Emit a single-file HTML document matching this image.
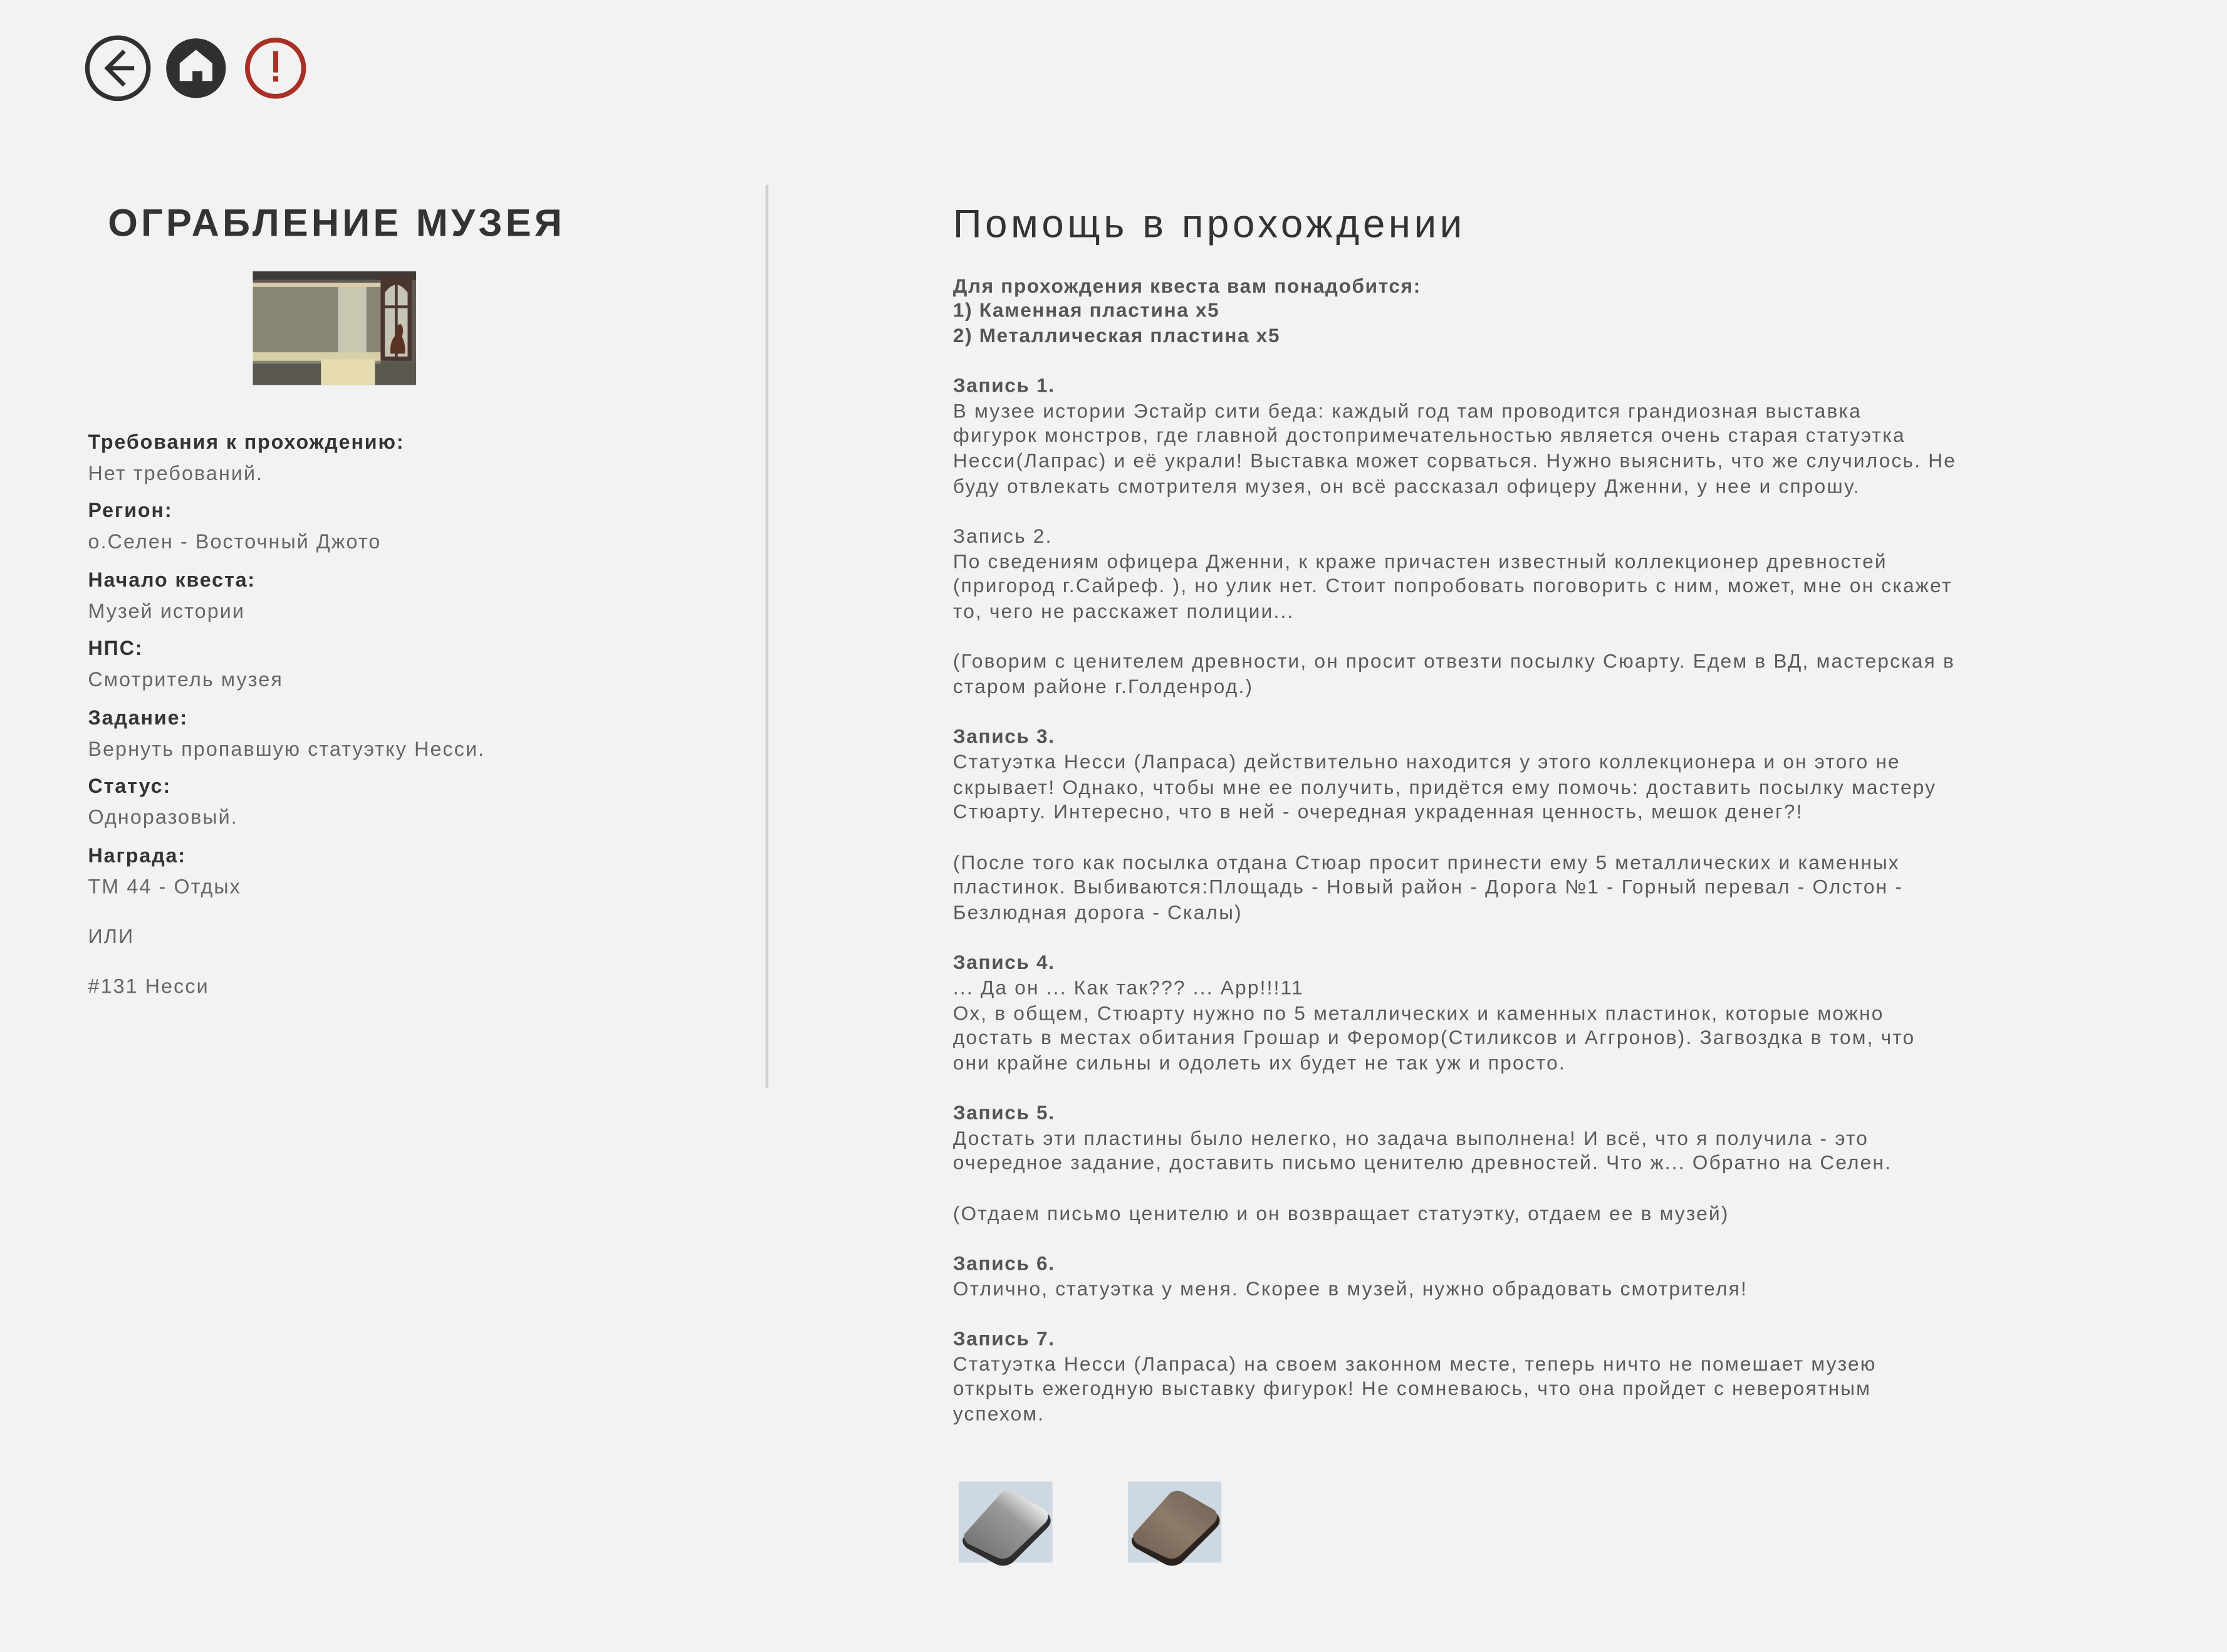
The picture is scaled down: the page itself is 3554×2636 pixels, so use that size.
<!DOCTYPE html>
<html><head><meta charset="utf-8">
<style>
html,body{margin:0;padding:0;background:#f2f2f2;}
body{width:3554px;height:2634px;overflow:hidden;}
#s{position:absolute;left:0;top:0;width:1568px;height:1163px;transform:scale(2.26658);transform-origin:0 0;font-family:"Liberation Sans",sans-serif;color:#5a5a5a;}
.a{position:absolute;white-space:nowrap;}
h1{position:absolute;left:76px;top:142px;margin:0;font-size:27px;font-weight:700;color:#333;letter-spacing:2.3px;}
h2{position:absolute;left:671px;top:142px;margin:0;font-size:28px;font-weight:400;color:#333;letter-spacing:2.5px;}
.lab{font-weight:700;color:#333;font-size:14.2px;letter-spacing:0.85px;}
.val{font-size:14.2px;color:#666;letter-spacing:0.95px;}
#r{position:absolute;left:671px;top:192.5px;font-size:13.9px;line-height:17.67px;color:#5a5a5a;letter-spacing:1.0px;}
#r div{white-space:nowrap;height:17.67px;}
#r b{font-weight:700;color:#555;letter-spacing:0.75px;}
</style></head><body><div id="s">
<svg class="a" style="left:58px;top:23px" width="170" height="50" viewBox="0 0 170 50">
<circle cx="25" cy="25" r="21.5" fill="none" stroke="#303030" stroke-width="3.2"/>
<path d="M29.5 13 L17.5 25 L29.5 37 M17.5 25 H36.5" fill="none" stroke="#303030" stroke-width="3"/>
<circle cx="80" cy="25" r="21" fill="#303030"/>
<path d="M80 12 L91.5 21.5 V34 H84.5 V27 H77.5 V34 H68.5 V21.5 Z" fill="#f2f2f2"/>
<circle cx="136" cy="25" r="19.8" fill="none" stroke="#a93026" stroke-width="3.4"/>
<rect x="134.3" y="13" width="3.6" height="15" fill="#a93026"/><rect x="134.3" y="30.5" width="3.6" height="4" fill="#a93026"/>
</svg>
<h1>ОГРАБЛЕНИЕ МУЗЕЯ</h1>
<svg class="a" style="left:178px;top:191px" width="115" height="80" viewBox="0 0 115 80">
<rect width="115" height="80" fill="#5e5a52"/>
<rect x="0" y="0" width="115" height="6" fill="#3e3a36"/>
<rect x="0" y="8" width="90" height="57" fill="#8a8676"/>
<rect x="60" y="10" width="20" height="50" fill="#c9c6b2"/>
<rect x="0" y="8" width="90" height="3" fill="#d8ccaa"/>
<rect x="0" y="65" width="115" height="15" fill="#5a5650"/>
<rect x="0" y="57" width="95" height="6" fill="#d9cfa6"/>
<rect x="48" y="62" width="38" height="18" fill="#e6dcaf"/>
<rect x="90" y="3" width="22" height="60" fill="#4a3630"/>
<path d="M93 30 V15 Q101 4 109 15 V60 H93 Z" fill="#c6c4b4"/>
<rect x="100" y="6" width="2" height="56" fill="#4a3630"/><rect x="93" y="24" width="16" height="2" fill="#4a3630"/>
<path d="M97 58 Q96 48 102 44 Q100 38 104 37 Q107 40 105 46 Q108 52 107 58 Z" fill="#5a3224"/>
</svg>
<div class="a lab" style="left:62px;top:304px">Требования к прохождению:</div>
<div class="a val" style="left:62px;top:326px">Нет требований.</div>
<div class="a lab" style="left:62px;top:352px">Регион:</div>
<div class="a val" style="left:62px;top:374px">о.Селен - Восточный Джото</div>
<div class="a lab" style="left:62px;top:401px">Начало квеста:</div>
<div class="a val" style="left:62px;top:423px">Музей истории</div>
<div class="a lab" style="left:62px;top:449px">НПС:</div>
<div class="a val" style="left:62px;top:471px">Смотритель музея</div>
<div class="a lab" style="left:62px;top:498px">Задание:</div>
<div class="a val" style="left:62px;top:520px">Вернуть пропавшую статуэтку Несси.</div>
<div class="a lab" style="left:62px;top:546px">Статус:</div>
<div class="a val" style="left:62px;top:568px">Одноразовый.</div>
<div class="a lab" style="left:62px;top:595px">Награда:</div>
<div class="a val" style="left:62px;top:617px">ТМ 44 - Отдых</div>
<div class="a val" style="left:62px;top:652px">ИЛИ</div>
<div class="a val" style="left:62px;top:687px">#131 Несси</div>
<div class="a" style="left:539px;top:130px;width:2px;height:636px;background:#d0d0d0"></div>
<h2>Помощь в прохождении</h2>
<div id="r">
<div><b>Для прохождения квеста вам понадобится:</b></div>
<div><b>1) Каменная пластина х5</b></div>
<div><b>2) Металлическая пластина х5</b></div>
<div></div>
<div><b>Запись 1.</b></div>
<div>В музее истории Эстайр сити беда: каждый год там проводится грандиозная выставка</div>
<div>фигурок монстров, где главной достопримечательностью является очень старая статуэтка</div>
<div>Несси(Лапрас) и её украли! Выставка может сорваться. Нужно выяснить, что же случилось. Не</div>
<div>буду отвлекать смотрителя музея, он всё рассказал офицеру Дженни, у нее и спрошу.</div>
<div></div>
<div>Запись 2.</div>
<div>По сведениям офицера Дженни, к краже причастен известный коллекционер древностей</div>
<div>(пригород г.Сайреф. ), но улик нет. Стоит попробовать поговорить с ним, может, мне он скажет</div>
<div>то, чего не расскажет полиции...</div>
<div></div>
<div>(Говорим с ценителем древности, он просит отвезти посылку Сюарту. Едем в ВД, мастерская в</div>
<div>старом районе г.Голденрод.)</div>
<div></div>
<div><b>Запись 3.</b></div>
<div>Статуэтка Несси (Лапраса) действительно находится у этого коллекционера и он этого не</div>
<div>скрывает! Однако, чтобы мне ее получить, придётся ему помочь: доставить посылку мастеру</div>
<div>Стюарту. Интересно, что в ней - очередная украденная ценность, мешок денег?!</div>
<div></div>
<div>(После того как посылка отдана Стюар просит принести ему 5 металлических и каменных</div>
<div>пластинок. Выбиваются:Площадь - Новый район - Дорога №1 - Горный перевал - Олстон -</div>
<div>Безлюдная дорога - Скалы)</div>
<div></div>
<div><b>Запись 4.</b></div>
<div>... Да он ... Как так??? ... Арр!!!11</div>
<div>Ох, в общем, Стюарту нужно по 5 металлических и каменных пластинок, которые можно</div>
<div>достать в местах обитания Грошар и Феромор(Стиликсов и Аггронов). Загвоздка в том, что</div>
<div>они крайне сильны и одолеть их будет не так уж и просто.</div>
<div></div>
<div><b>Запись 5.</b></div>
<div>Достать эти пластины было нелегко, но задача выполнена! И всё, что я получила - это</div>
<div>очередное задание, доставить письмо ценителю древностей. Что ж... Обратно на Селен.</div>
<div></div>
<div>(Отдаем письмо ценителю и он возвращает статуэтку, отдаем ее в музей)</div>
<div></div>
<div><b>Запись 6.</b></div>
<div>Отлично, статуэтка у меня. Скорее в музей, нужно обрадовать смотрителя!</div>
<div></div>
<div><b>Запись 7.</b></div>
<div>Статуэтка Несси (Лапраса) на своем законном месте, теперь ничто не помешает музею</div>
<div>открыть ежегодную выставку фигурок! Не сомневаюсь, что она пройдет с невероятным</div>
<div>успехом.</div>
</div>
<svg class="a" style="left:675px;top:1043px" width="67" height="62" viewBox="0 0 67 62">
<defs><linearGradient id="g1" x1="0" y1="1" x2="1" y2="0"><stop offset="0" stop-color="#6a6a6a"/><stop offset="0.6" stop-color="#9a9a9a"/><stop offset="0.85" stop-color="#eeeeee"/><stop offset="1" stop-color="#888"/></linearGradient></defs>
<rect width="66" height="57" fill="#cdd8e2"/>
<path d="M3 40 L30 10 Q35 6 40 9 L63 23 Q67 28 62 33 L38 57 Q32 61 26 58 L6 47 Q2 44 3 40 Z" fill="#2e2e2e"/>
<path d="M4 37 L30 8 Q35 5 40 8 L61 20 Q65 24 61 29 L37 52 Q32 56 26 53 L7 44 Q3 41 4 37 Z" fill="url(#g1)"/>
</svg>
<svg class="a" style="left:794px;top:1043px" width="67" height="62" viewBox="0 0 67 62">
<defs><linearGradient id="g2" x1="0" y1="1" x2="1" y2="0"><stop offset="0" stop-color="#6e5e50"/><stop offset="0.5" stop-color="#8c7a6a"/><stop offset="1" stop-color="#6f6054"/></linearGradient></defs>
<rect width="66" height="57" fill="#cdd8e2"/>
<path d="M3 40 L30 10 Q35 6 40 9 L63 23 Q67 28 62 33 L38 57 Q32 61 26 58 L6 47 Q2 44 3 40 Z" fill="#2a221c"/>
<path d="M4 37 L30 8 Q35 5 40 8 L61 20 Q65 24 61 29 L37 52 Q32 56 26 53 L7 44 Q3 41 4 37 Z" fill="url(#g2)"/>
</svg>
</div></body></html>
